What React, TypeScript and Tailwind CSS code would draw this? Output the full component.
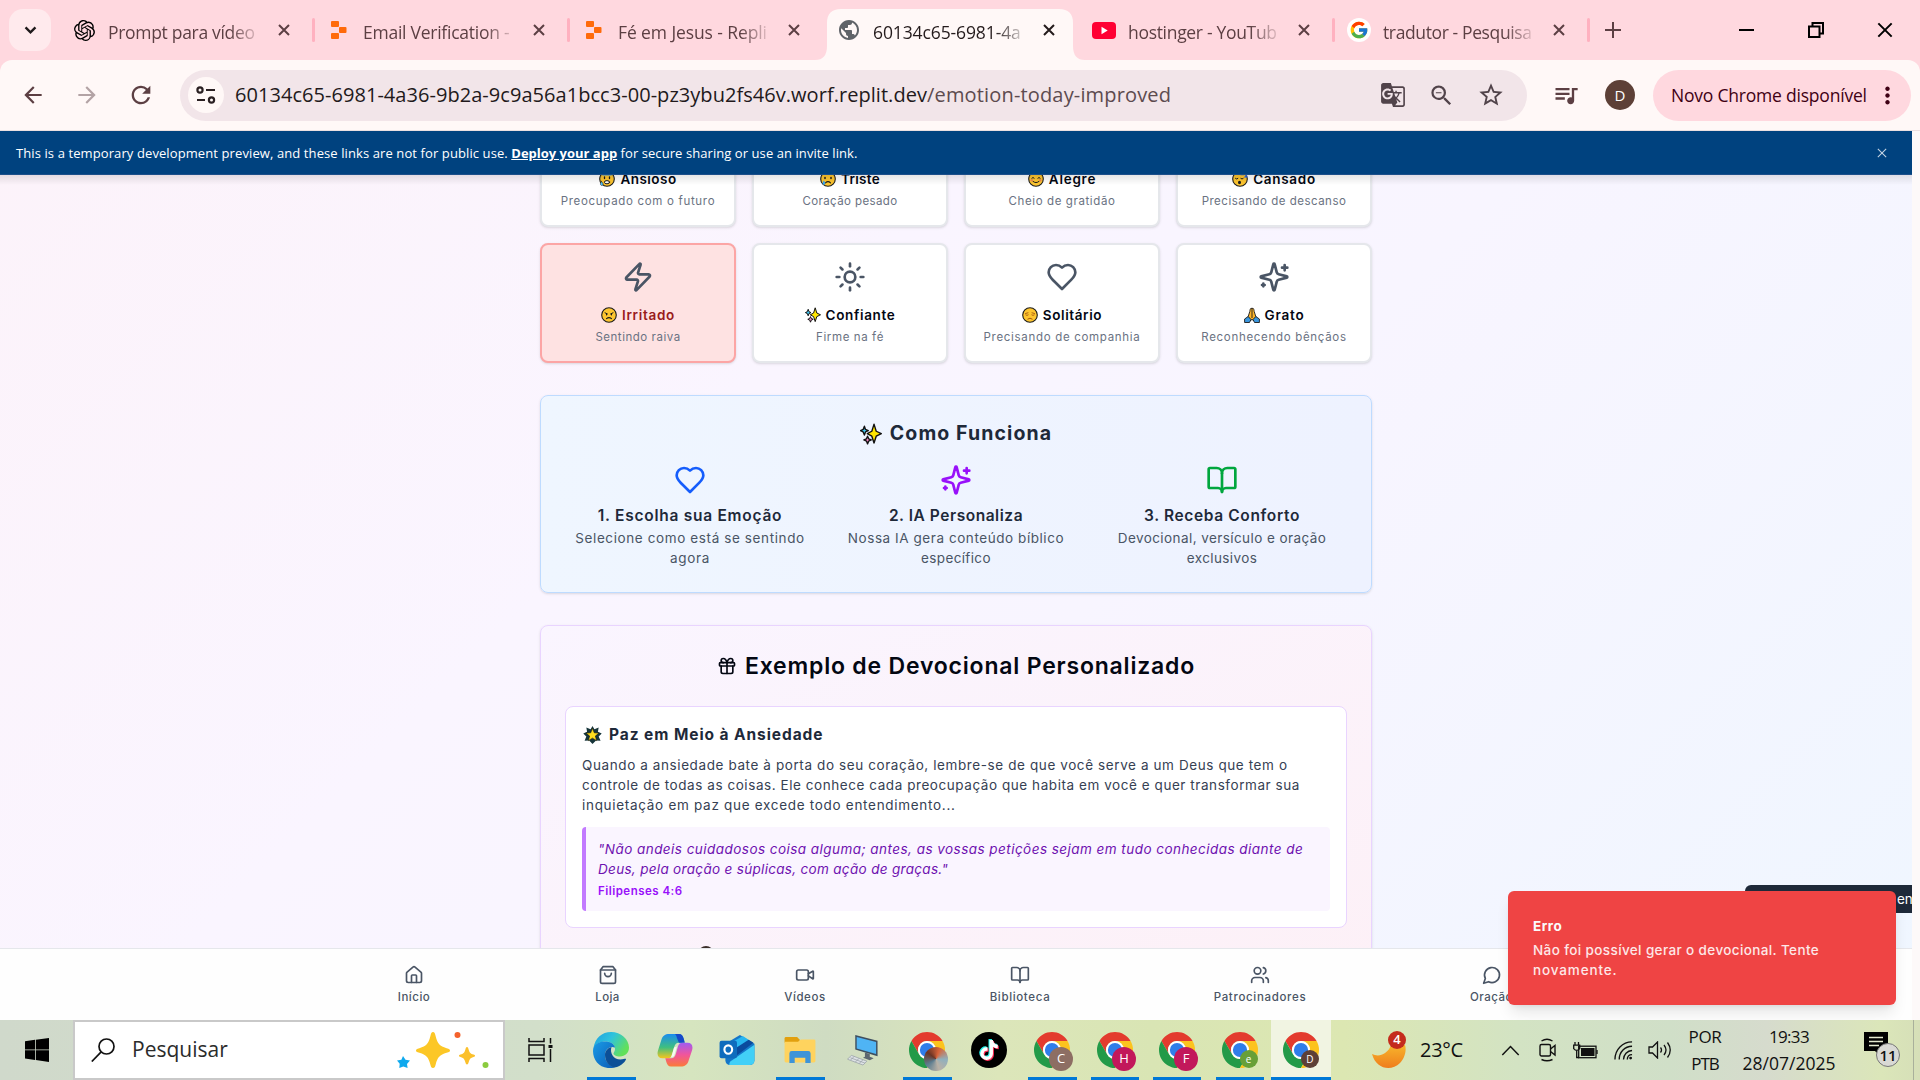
import React from "react";
import { Zap, Sun, BookOpen, Gift, House, Video, Users } from "lucide-react";
import {
  MdArrowBack,
  MdArrowForward,
  MdRefresh,
  MdGTranslate,
  MdZoomOut,
  MdStarBorder,
  MdQueueMusic,
  MdMoreVert,
  MdPublic,
} from "react-icons/md";
import { SiOpenai } from "react-icons/si";
import { FcGoogle } from "react-icons/fc";
import { FaTiktok } from "react-icons/fa";

type IconProps = { className?: string };

/* ---------- line icons ---------- */

const Line = ({ className, children, sw = 2 }: IconProps & { children: React.ReactNode; sw?: number }) => (
  <svg viewBox="0 0 24 24" fill="none" stroke="currentColor" strokeWidth={sw} strokeLinecap="round" strokeLinejoin="round" className={className}>
    {children}
  </svg>
);

const Heart = ({ className }: IconProps) => (
  <Line className={className}>
    <path d="M19 14c1.49-1.46 3-3.21 3-5.5A5.5 5.5 0 0 0 16.5 3c-1.76 0-3 .5-4.5 2-1.5-1.5-2.74-2-4.5-2A5.5 5.5 0 0 0 2 8.5c0 2.3 1.5 4.05 3 5.5l7 7Z" />
  </Line>
);

const Sparkles = ({ className }: IconProps) => (
  <Line className={className}>
    <path d="M9.937 15.5A2 2 0 0 0 8.5 14.063l-6.135-1.582a.5.5 0 0 1 0-.962L8.5 9.936A2 2 0 0 0 9.937 8.5l1.582-6.135a.5.5 0 0 1 .963 0L14.063 8.5A2 2 0 0 0 15.5 9.937l6.135 1.581a.5.5 0 0 1 0 .964L15.5 14.063a2 2 0 0 0-1.437 1.437l-1.582 6.135a.5.5 0 0 1-.963 0z" />
    <path d="M20 3v4M22 5h-4M4 17v2M5 18H3" />
  </Line>
);

const Bag = ({ className }: IconProps) => (
  <Line className={className}>
    <path d="M6 2 3 6v14a2 2 0 0 0 2 2h14a2 2 0 0 0 2-2V6l-3-4Z" />
    <path d="M3 6h18M16 10a4 4 0 0 1-8 0" />
  </Line>
);

const Message = ({ className }: IconProps) => (
  <Line className={className}>
    <path d="M7.9 20A9 9 0 1 0 4 16.1L2 22Z" />
  </Line>
);

const Cross = ({ className, sw = 2 }: IconProps & { sw?: number }) => (
  <svg viewBox="0 0 12 12" fill="none" stroke="currentColor" strokeWidth={sw} className={className}>
    <path d="M1 1 11 11M11 1 1 11" />
  </svg>
);

/* ---------- emoji ---------- */

const Face = ({ children }: { children: React.ReactNode }) => (
  <svg viewBox="0 0 16 16" className="size-4 shrink-0" fill="none" stroke="#1b1b1b" strokeLinecap="round">
    <circle cx="8" cy="8" r="7.3" fill="#fdc52f" strokeWidth="1.1" />
    {children}
  </svg>
);

const Anxious = () => (
  <Face>
    <path d="M1.2 8A7 7 0 0 1 14.8 8L13 4.500H3z" fill="#3a96dd" stroke="none" />
    <path d="M5.500 6v1.500M10.500 6v1.500" strokeWidth="1.300" />
    <ellipse cx="8" cy="11.200" rx="2.600" ry="1.600" fill="#fff" strokeWidth="1" />
    <path d="M2.500 10.500c-1 1.500-1.500 2.500-.7 3.500s2 .5 2.200-.6-.7-2-1.500-2.900z" fill="#4fc3f7" strokeWidth=".5" />
  </Face>
);
const Sad = () => (
  <Face>
    <path d="M5 6.500v1M11 6.500v1" strokeWidth="1.500" />
    <path d="M5.500 11.800Q8 9.500 10.500 11.800" strokeWidth="1.100" />
    <path d="M3.800 9.500c-1 1.500-1.600 2.700-.8 3.700s2 .5 2.200-.6-.7-2.200-1.400-3.100z" fill="#3aa5ee" stroke="none" />
  </Face>
);
const Happy = () => (
  <Face>
    <path d="M3.800 7.200q1.200-1.700 2.400 0M9.800 7.200q1.200-1.700 2.400 0M4.800 10.200Q8 13.200 11.200 10.200" strokeWidth="1" />
    <circle cx="3.800" cy="9.300" r="1.200" fill="#f2894f" stroke="none" />
    <circle cx="12.200" cy="9.300" r="1.200" fill="#f2894f" stroke="none" />
  </Face>
);
const Sleepy = () => (
  <Face>
    <path d="M3.500 7.500q1.200 1.200 2.400 0M8.800 7.500q1.200 1.200 2.400 0" strokeWidth="1" />
    <ellipse cx="7.500" cy="11.500" rx="1.500" ry="1.700" fill="#1b1b1b" stroke="none" />
    <path d="M9.500 1h2.500l-2.500 2.800H12M13 3.500h2.200L13 6h2.200" stroke="#2563eb" strokeWidth="1.100" />
  </Face>
);
const Angry = () => (
  <Face>
    <path d="M4 5.800 6.500 7M12 5.800 9.500 7M5.500 7v1M10.500 7v1" strokeWidth="1" />
    <path d="M5.500 11.600Q8 9.600 10.500 11.600" strokeWidth="1.100" />
  </Face>
);
const Lonely = () => (
  <Face>
    <path d="M3.500 6.500 6 5.800M12.500 6.500 10 5.800M3.800 8q1.200 1 2.400 0M9.800 8q1.200 1 2.400 0" stroke="#a4570c" strokeWidth=".9" />
    <path d="M5.800 12Q8 10.200 10.200 12" stroke="#a4570c" strokeWidth="1" />
  </Face>
);
const Hands = () => (
  <svg viewBox="0 0 16 16" className="size-4 shrink-0" stroke="#1b1b1b" strokeWidth=".9" strokeLinejoin="round">
    <path d="M7.200 1 8 2l.8-1c1 .6 1.200 2 1.400 3.500l1.600 5L10.500 14 8 12.500 5.500 14 4.200 9.500l1.600-5C6 3 6.200 1.600 7.200 1z" fill="#fdb52a" />
    <path d="M4.200 9.500 7 12.500 5.500 15.500H.6V12zM11.800 9.500 9 12.500l1.500 3h4.900V12z" fill="#3a96dd" />
    <path d="M8 2v9" fill="none" />
  </svg>
);
const Glitter = ({ className = "size-4 shrink-0" }: IconProps) => (
  <svg viewBox="0 0 16 16" className={className} stroke="#111" strokeWidth="1" strokeLinejoin="round">
    <path d="M3.200 2.300 4 4.700l2 .9-2 .9-.8 2.300-.9-2.300-1.900-.9 1.900-.9z" fill="#3ec6f2" />
    <path d="m5.500 9.600.8 1.900 1.900.8-1.900.8-.8 2.100-.8-2.100-1.900-.8 1.900-.8z" fill="#f48ac4" />
    <path d="M10.200.8 11.800 6l3.700 1.800-3.700 1.800-1.600 5-1.600-5-3.300-1.800L8.600 6z" fill="#ffe600" />
  </svg>
);
const GlowStar = () => (
  <svg viewBox="0 0 20 20" className="h-5 w-[19px] shrink-0" strokeLinejoin="round">
    <path d="m10 .5 2 3.500 4.500-2-.8 4.500 4 2-3.200 3 2 4.500-4.800-.3L10 19.500l-3.500-3.800-4.800.3 1.800-4.500-3.200-3 4-2L3.500 2 8 4z" fill="#16353a" />
    <path d="m10 3 1.900 4.700 5 .3-3.900 3.100 1.400 4.900L10 13.300 5.600 16 7 11.100 3.100 8l5-.3z" fill="#ffdf1f" stroke="#111" strokeWidth=".6" />
  </svg>
);

/* ---------- browser chrome ---------- */

const ReplitLogo = () => (
  <svg viewBox="0 0 16 18" className="h-[18px] w-4" fill="#ff6a0a">
    <rect x="0" y="0" width="8" height="6" rx="1" />
    <rect x="8" y="6" width="7.500" height="6" rx="1" />
    <rect x="0" y="12" width="8" height="6" rx="1" />
  </svg>
);
const YouTubeLogo = () => (
  <svg viewBox="0 0 24 17" className="h-[17px] w-6">
    <rect width="24" height="17" rx="4" fill="#ff0033" />
    <path d="m9.500 4.800 6.200 3.700-6.200 3.700z" fill="#fff" />
  </svg>
);

const tabs: { icon: React.ReactNode; text: string; tracking: string; sep?: boolean; active?: boolean }[] = [
  { icon: <SiOpenai className="size-[21px] text-black" />, text: "Prompt para vídeo", tracking: "tracking-[-0.31px]", sep: true },
  { icon: <ReplitLogo />, text: "Email Verification -", tracking: "tracking-[-0.25px]", sep: true },
  { icon: <ReplitLogo />, text: "Fé em Jesus - Repli", tracking: "tracking-[-0.1px]" },
  { icon: <MdPublic className="size-6 text-[#5f6368]" />, text: "60134c65-6981-4a", tracking: "tracking-[-0.11px]", active: true },
  { icon: <YouTubeLogo />, text: "hostinger - YouTub", tracking: "tracking-[-0.31px]", sep: true },
  {
    icon: (
      <span className="flex size-6 items-center justify-center rounded-full bg-white">
        <FcGoogle className="size-[20px]" />
      </span>
    ),
    text: "tradutor - Pesquisa",
    tracking: "tracking-[-0.38px]",
    sep: true,
  },
];

const TabBar = () => (
  <div className="flex h-[60px] shrink-0 bg-[#ffd8df]">
    <div className="ml-[9px] mt-[9px] flex h-[42px] w-[42px] items-center justify-center rounded-[14px] bg-[#ffeaed]">
      <svg viewBox="0 0 14 10" className="h-[9px] w-[13px]" fill="none" stroke="#1f1a1b" strokeWidth="2.600">
        <path d="m1.500 1.500 5.500 5.500 5.500-5.500" />
      </svg>
    </div>
    <div className="ml-[11px] flex">
      {tabs.map((t, i) => (
        <div key={i} className="relative flex h-[60px] w-[255px] pt-[9px]">
          {t.active && (
            <svg viewBox="0 0 270 51" className="absolute left-[-12px] top-[9px] h-[51px] w-[270px]" fill="#fff8f7">
              <path d="M0 51Q12 51 12 37V14Q12 0 26 0H244Q258 0 258 14V37Q258 51 270 51Z" />
            </svg>
          )}
          <div className="relative flex h-[42px] w-full items-center">
            <span className="ml-2.5 flex w-6 items-center justify-center">{t.icon}</span>
            <span
              className={`ml-3 w-[149px] overflow-hidden whitespace-nowrap pt-1 text-[17.5px] leading-6 [mask-image:linear-gradient(90deg,#000_82%,transparent_104%)] ${t.tracking} ${t.active ? "text-[#241b1c]" : "text-[#5c3f43]"}`}
            >
              {t.text}
            </span>
            <Cross sw={2} className={`ml-[21px] size-3 ${t.active ? "text-[#241b1c]" : "text-[#5c3f43]"}`} />
            {t.sep && <span className="ml-[22px] h-6 w-[3px] rounded-full bg-[#ffb1c0]" />}
          </div>
        </div>
      ))}
    </div>
    <svg viewBox="0 0 16 16" className="ml-[13px] mt-[22px] size-4" stroke="#5c3f43" strokeWidth="2">
      <path d="M8 0v16M0 8h16" />
    </svg>
    <div className="ml-auto mr-[27px] flex items-center text-black">
      <span className="mb-px h-0.5 w-[15px] bg-black" />
      <svg viewBox="0 0 16 16" className="ml-[54px] size-4" fill="none" stroke="#000" strokeWidth="2">
        <path d="M1 4.500h10.500V15H1zM4.500 4V1H15v10.500h-3" />
      </svg>
      <Cross sw={1.500} className="ml-[53px] size-4" />
    </div>
  </div>
);

const Toolbar = () => (
  <div className="flex h-[71px] shrink-0 bg-[#ffd8df]">
    <div className="flex w-full items-center rounded-t-[12px] border-b border-[#eadfe1] bg-[#fff8f7]">
      <MdArrowBack className="ml-5 size-[26px] text-[#5c3f43]" />
      <MdArrowForward className="ml-[28px] size-[26px] text-[#b3a3a5]" />
      <MdRefresh className="ml-[27px] size-[28px] text-[#5c3f43]" />
      <div className="ml-[25px] flex h-[51px] w-[1347px] items-center rounded-full bg-[#f2e5e9]">
        <span className="ml-2 flex size-9 items-center justify-center rounded-full bg-[#fff8f7]">
          <svg viewBox="0 0 20 18" className="h-[18px] w-5" fill="none" stroke="#2a2022" strokeWidth="2.200">
            <circle cx="4" cy="4" r="2.600" />
            <path d="M10 4h9M1 14h8" />
            <circle cx="15.500" cy="14" r="2.600" />
          </svg>
        </span>
        <p className="ml-[11px] whitespace-nowrap pb-px text-[20px] leading-7 tracking-[0.045px] text-[#22191b]">
          60134c65-6981-4a36-9b2a-9c9a56a1bcc3-00-pz3ybu2fs46v.worf.replit.dev
          <span className="tracking-[0.16px] text-[#5d4b4f]">/emotion-today-improved</span>
        </p>
        <div className="ml-auto mr-[22px] flex items-center gap-[22px] text-[#51434a]">
          <MdGTranslate className="size-[26px]" />
          <MdZoomOut className="size-[27px]" />
          <MdStarBorder className="size-[28px]" />
        </div>
      </div>
      <MdQueueMusic className="ml-[25px] size-[28px] -scale-x-100 rotate-180 -scale-y-100 text-[#5c3f43] [transform:none]" />
      <span className="ml-[25px] flex size-[30px] items-center justify-center rounded-full bg-[#5d4037] text-[15px] text-white">D</span>
      <div className="ml-[18px] flex h-[51px] w-[258px] items-center rounded-full bg-[#ffd8df] text-[#3f0014]">
        <span className="ml-[18px] whitespace-nowrap text-[17.5px] tracking-[-0.21px]">Novo Chrome disponível</span>
        <MdMoreVert className="ml-[7px] size-[27px]" />
      </div>
    </div>
  </div>
);

const PreviewBanner = () => (
  <div className="flex h-11 w-[1912px] shrink-0 items-center border-b border-[#1c4f8a] bg-[#00427f] pl-4 text-[13px] font-medium text-white">
    <p className="whitespace-nowrap pt-0.5">
      <span className="tracking-[0.1px]">This is a temporary development preview, and these links are not for public use.</span>{" "}
      <span className="font-bold underline">Deploy your app</span>{" "}
      <span className="tracking-[0.07px]">for secure sharing or use an invite link.</span>
    </p>
    <Cross sw={1.300} className="ml-auto mr-[25px] size-2.5 text-[#c3d3e3]" />
  </div>
);

/* ---------- page content ---------- */

const emotions = [
  { icon: Zap, emoji: <Anxious />, name: "Ansioso", nt: "tracking-[0.47px]", desc: "Preocupado com o futuro", dt: "tracking-[0.68px]" },
  { icon: Heart, emoji: <Sad />, name: "Triste", nt: "tracking-[0.3px]", desc: "Coração pesado", dt: "tracking-[0.4px]" },
  { icon: Sun, emoji: <Happy />, name: "Alegre", nt: "tracking-[0.75px]", desc: "Cheio de gratidão", dt: "tracking-[0.61px]" },
  { icon: Heart, emoji: <Sleepy />, name: "Cansado", nt: "tracking-[0.7px]", desc: "Precisando de descanso", dt: "tracking-[0.5px]" },
  { icon: Zap, emoji: <Angry />, name: "Irritado", nt: "tracking-[0.69px]", desc: "Sentindo raiva", dt: "tracking-[0.53px]", selected: true },
  { icon: Sun, emoji: <Glitter />, name: "Confiante", nt: "tracking-[0.67px]", desc: "Firme na fé", dt: "tracking-[0.61px]" },
  { icon: Heart, emoji: <Lonely />, name: "Solitário", nt: "tracking-[0.6px]", desc: "Precisando de companhia", dt: "tracking-[0.69px]" },
  { icon: Sparkles, emoji: <Hands />, name: "Grato", nt: "tracking-[0.8px]", desc: "Reconhecendo bênçãos", dt: "tracking-[0.69px]" },
];

const EmotionGrid = () => (
  <div className="grid grid-cols-4 gap-4">
    {emotions.map((e) => (
      <div
        key={e.name}
        className={`flex h-[120px] flex-col items-center rounded-lg border-2 pt-4 shadow-sm ${e.selected ? "border-[#fca5a5] bg-[#fee2e2]" : "border-gray-200 bg-white"}`}
      >
        <e.icon className="size-8 text-gray-600" />
        <div className={`mt-3 flex h-5 items-center gap-[5px] whitespace-nowrap text-[13.5px] font-semibold ${e.nt} ${e.selected ? "text-[#991b1b]" : "text-gray-950"}`}>
          {e.emoji}
          {e.name}
        </div>
        <p className={`mt-1 whitespace-nowrap text-[11.5px] leading-4 text-gray-500 ${e.dt}`}>{e.desc}</p>
      </div>
    ))}
  </div>
);

const steps = [
  {
    icon: <Heart className="size-8 text-blue-600" />,
    title: "1. Escolha sua Emoção",
    tt: "tracking-[0.74px]",
    lines: [
      ["Selecione como está se sentindo", "tracking-[0.61px]"],
      ["agora", "tracking-[0.7px]"],
    ],
  },
  {
    icon: <Sparkles className="size-8 text-purple-600" />,
    title: "2. IA Personaliza",
    tt: "tracking-[0.54px]",
    lines: [
      ["Nossa IA gera conteúdo bíblico", "tracking-[0.56px]"],
      ["específico", "tracking-[0.36px]"],
    ],
  },
  {
    icon: <BookOpen className="size-8 text-green-600" />,
    title: "3. Receba Conforto",
    tt: "tracking-[0.63px]",
    lines: [
      ["Devocional, versículo e oração", "tracking-[0.42px]"],
      ["exclusivos", "tracking-[0.39px]"],
    ],
  },
];

const HowItWorks = () => (
  <section className="mt-8 h-[198px] rounded-lg border border-blue-200 bg-linear-to-r from-[#eff6ff] to-[#eef2ff] p-6 shadow-sm">
    <h3 className="flex h-7 items-center justify-center gap-2 text-[19px] font-bold tracking-[1.1px] text-gray-800">
      <Glitter className="size-[22px]" />
      <span className="text-[19.5px]">Como Funciona</span>
    </h3>
    <div className="mt-4 grid grid-cols-3 gap-4">
      {steps.map((s) => (
        <div key={s.title} className="flex flex-col items-center">
          {s.icon}
          <h4 className={`mt-2 text-[15.5px] font-semibold leading-6 text-gray-800 ${s.tt}`}>{s.title}</h4>
          {s.lines.map(([text, tracking]) => (
            <p key={text} className={`whitespace-nowrap text-[13.5px] leading-5 text-gray-600 ${tracking}`}>
              {text}
            </p>
          ))}
        </div>
      ))}
    </div>
  </section>
);

const Example = () => (
  <section className="mt-8 h-[420px] rounded-lg border border-purple-200 bg-linear-to-br from-[#faf5ff] to-[#fdf0f6] p-6 shadow-sm">
    <h3 className="flex h-8 items-center justify-center gap-2 whitespace-nowrap text-[23px] font-semibold tracking-[0.8px] text-gray-950">
      <Gift className="size-5" strokeWidth={2} />
      Exemplo de Devocional Personalizado
    </h3>
    <div className="mt-6 h-[222px] rounded-lg border border-purple-200 bg-white p-4">
      <h4 className="flex h-6 items-center gap-[7px] pl-px text-[15.5px] font-bold tracking-[0.92px] text-gray-800">
        <GlowStar />
        Paz em Meio à Ansiedade
      </h4>
      <div className="mt-2 whitespace-nowrap text-[13.5px] leading-5 text-gray-700">
        <p className="tracking-[0.6px]">Quando a ansiedade bate à porta do seu coração, lembre-se de que você serve a um Deus que tem o</p>
        <p className="tracking-[0.56px]">controle de todas as coisas. Ele conhece cada preocupação que habita em você e quer transformar sua</p>
        <p className="tracking-[0.7px]">inquietação em paz que excede todo entendimento...</p>
      </div>
      <blockquote className="mt-3 h-[84px] whitespace-nowrap rounded border-l-4 border-purple-400 bg-[#faf5ff] p-3">
        <div className="text-[13.5px] italic leading-5 text-purple-800">
          <p className="tracking-[0.46px]">"Não andeis cuidadosos coisa alguma; antes, as vossas petições sejam em tudo conhecidas diante de</p>
          <p className="tracking-[0.31px]">Deus, pela oração e súplicas, com ação de graças."</p>
        </div>
        <p className="mt-1 text-[11.5px] font-semibold leading-4 tracking-[0.48px] text-purple-600">Filipenses 4:6</p>
      </blockquote>
    </div>
    <div className="ml-[133px] mt-[18px] size-4 rounded-full border-2 border-[#3b2f2a] bg-[#c9962b]" />
  </section>
);

const navItems = [
  { icon: <House className="size-5" />, label: "Início", w: "w-[188px]", t: "tracking-[0.51px]" },
  { icon: <Bag className="size-5" />, label: "Loja", w: "w-[199px]", t: "tracking-[0.38px]" },
  { icon: <Video className="size-5" />, label: "Vídeos", w: "w-[196px]", t: "tracking-[0.55px]" },
  { icon: <BookOpen className="size-5" />, label: "Biblioteca", w: "w-[234px]", t: "tracking-[0.65px]" },
  { icon: <Users className="size-5" />, label: "Patrocinadores", w: "w-[246px]", t: "tracking-[0.68px]" },
  { icon: <Message className="size-5" />, label: "Oração", w: "w-[217px]", t: "tracking-[0.5px]" },
];

const BottomNav = () => (
  <nav className="flex h-[72px] shrink-0 border-t border-gray-200 bg-[#fefefe] pl-80 text-gray-600">
    {navItems.map((n) => (
      <div key={n.label} className={`flex flex-col items-center pt-4 ${n.w}`}>
        {n.icon}
        <span className={`mt-1 text-[11.5px] font-medium leading-4 ${n.t}`}>{n.label}</span>
      </div>
    ))}
  </nav>
);

const Toast = () => (
  <div className="absolute bottom-[15px] right-4 h-[114px] w-[388px] rounded-md bg-[#ef4444] pl-[25px] pt-[25px] text-[13.5px] leading-5 text-[#fafafa] shadow-lg">
    <p className="font-bold tracking-[0.5px]">Erro</p>
    <div className="mt-1 font-medium text-[#fde8e8]">
      <p className="whitespace-nowrap tracking-[0.38px]">Não foi possível gerar o devocional. Tente</p>
      <p className="tracking-[0.86px]">novamente.</p>
    </div>
  </div>
);

/* ---------- taskbar ---------- */

const ChromeLogo = () => (
  <svg viewBox="2 2 44 44" className="size-9">
    <path d="M24 13H43.050A22 22 0 0 0 4.950 13L14.470 29.500A11 11 0 0 1 24 13Z" fill="#e33b2e" />
    <path d="M14.470 29.500 4.950 13A22 22 0 0 0 24 46L33.530 29.500A11 11 0 0 1 14.470 29.500Z" fill="#239a48" />
    <path d="M33.530 29.500 24 46A22 22 0 0 0 43.050 13H24A11 11 0 0 1 33.530 29.500Z" fill="#fcc31e" />
    <circle cx="24" cy="24" r="11" fill="#fff" />
    <circle cx="24" cy="24" r="8.700" fill="#2f7de9" />
  </svg>
);

const Task = ({ w, bar, active, children }: { w: string; bar?: string; active?: boolean; children: React.ReactNode }) => (
  <div className={`relative flex h-[60px] items-center justify-center ${w} ${active ? "bg-[#f1f4e2]" : ""}`}>
    {children}
    {bar && <span className={`absolute bottom-0 h-[3px] bg-[#0078d7] ${bar}`} />}
  </div>
);

const ChromeTask = ({ w, bar, letter, badge, active, small }: { w: string; bar: string; letter?: string; badge: string; active?: boolean; small?: boolean }) => (
  <Task w={w} bar={bar} active={active}>
    <div className="relative">
      <ChromeLogo />
      <span
        className={`absolute flex items-center justify-center rounded-full text-white ${small ? "bottom-0 right-0 size-[18px] text-[10px]" : "bottom-[-3px] right-[-3px] size-6 text-[13px]"} ${badge}`}
      >
        {letter}
      </span>
    </div>
  </Task>
);

const Edge = () => (
  <svg viewBox="0 0 36 36" className="size-9">
    <defs>
      <linearGradient id="edgeTop" x1="0" y1="0" x2="1" y2=".5">
        <stop offset="0" stopColor="#1d9fe0" />
        <stop offset=".5" stopColor="#2fc3dd" />
        <stop offset="1" stopColor="#62e05a" />
      </linearGradient>
      <linearGradient id="edgeLow" x1="0" y1="0" x2="1" y2="1">
        <stop offset="0" stopColor="#1a9be6" />
        <stop offset="1" stopColor="#0a5db8" />
      </linearGradient>
    </defs>
    <path d="M.5 16C2 6 9 0 18 0c10 0 18 7.500 18 15.500 0 5.500-4 9-9 9-4 0-6.500-1.500-6.500-3 0-1 1.500-2 1.500-4.500C22 12.500 18 9.500 13 9.500 7 9.500 2.500 12 .5 16z" fill="url(#edgeTop)" />
    <path d="M0 19C0 12 6 9.500 12 9.500c5 0 9 2 10 6-6-2-10 2-10 8C12 29 16 34 22 35.500 9 38.500 0 30 0 19z" fill="url(#edgeLow)" />
    <path d="M12 23c0-4 2.500-7 6.500-8-2 6 2 12.500 9 12.500 3 0 5-1 5.500-.5.600.8-4.500 8-11.500 8.500C16 34.500 12 29.500 12 23z" fill="#0c4f97" />
  </svg>
);

const Copilot = () => (
  <svg viewBox="0 0 36 34" className="h-[33px] w-9">
    <defs>
      <linearGradient id="coA" x1="0" y1="0" x2="0" y2="1">
        <stop offset="0" stopColor="#1a8cf0" />
        <stop offset=".55" stopColor="#3fbf7f" />
        <stop offset="1" stopColor="#f6c51c" />
      </linearGradient>
      <linearGradient id="coB" x1="0" y1="0" x2="0" y2="1">
        <stop offset="0" stopColor="#a05cf2" />
        <stop offset=".5" stopColor="#f0559c" />
        <stop offset="1" stopColor="#fb7a38" />
      </linearGradient>
    </defs>
    <path d="M12 0h10c3 0 4 2 5 5l1 4h-6c-3 0-4 2-5 5l-2 7c-1 3-2 4-5 4H5c-4 0-6-3-4.500-8L4 6c1-4 4-6 8-6z" fill="url(#coA)" />
    <path d="M18 0h4c3 0 4 2 5 5l1 4h-6l-2-5c-.5-2-1-3-2-4z" fill="#1749c9" />
    <path d="M24 33.500H14c-3 0-4-2-5-5L8 25h6c3 0 4-2 5-5l2-7c1-3 2-4 5-4h5c4 0 6 3 4.500 8L32 27.500c-1 4-4 6-8 6z" fill="url(#coB)" />
    <path d="m17 14 3-1-3 10-3 1z" fill="#fff" opacity=".8" />
  </svg>
);

const Outlook = () => (
  <svg viewBox="0 0 36 32" className="h-[31px] w-9">
    <path d="M6 9 21 0l15 9v17c0 3-2 5-5 5H11c-3 0-5-2-5-5z" fill="#1476c8" />
    <path d="M12 8 24 1l9 6-17 13z" fill="#28b6f0" />
    <path d="m16 14 14-9 5 3-17 13z" fill="#0a4b9e" />
    <path d="m36 10v16c0 3-2 5-5 5H10c0-3 1-4 3-5z" fill="#42d0f7" />
    <rect y="6" width="18" height="18" rx="2" fill="#0f6cbd" />
    <ellipse cx="9" cy="15" rx="4" ry="4.300" fill="none" stroke="#fff" strokeWidth="2.200" />
  </svg>
);

const Folder = () => (
  <svg viewBox="0 0 32 28" className="h-[27px] w-8">
    <path d="M0 1.500Q0 0 1.500 0H13l3 3-2 3H0z" fill="#e2a00f" />
    <path d="M0 5h14l3-2.500h13.500Q32 2.500 32 4v21q0 1.500-1.500 1.500h-29Q0 26.500 0 25z" fill="#ffd35e" />
    <path d="M5 27V17q0-2.500 2.500-2.500h17Q27 14.500 27 17v10h-5.500v-5.500h-11V27z" fill="#3d94d9" />
  </svg>
);

const Computer = () => (
  <svg viewBox="0 0 32 32" className="h-[31px] w-8">
    <path d="m8 0 23 6v16L8 15z" fill="#3e4f60" />
    <path d="m9.500 2 20 5.300v12.400l-20-5.700z" fill="#4fb4f4" />
    <path d="m18 18 5 1.500v3l4 1.500-4 2-7-2.500 2-1z" fill="#5c6670" />
    <path d="m4 21 16 6-4 4L0 25z" fill="#dfe3e6" stroke="#9aa2a8" strokeWidth=".8" />
    <path d="m3 23.500 15 5.500M7 22l-4 4M12 24l-4 4M16 25.500l-4 4" stroke="#9aa2a8" strokeWidth=".8" />
  </svg>
);

const SearchBox = () => (
  <div className="flex h-[60px] w-[432px] items-center border-2 border-[#c9c9c9] bg-white">
    <svg viewBox="0 0 24 24" className="ml-4 size-6" fill="none" stroke="#111" strokeWidth="1.700">
      <circle cx="15.500" cy="8.500" r="7.500" />
      <path d="M10.200 13.800.8 23.500" />
    </svg>
    <span className="ml-[17px] text-[21px] text-[#2b2b2b]">Pesquisar</span>
    <svg viewBox="0 0 92 36" className="ml-auto mr-3.5 h-9 w-[92px]">
      <path d="M36 0c1.500 0 2 1.500 2.600 4 2 8 4 10 11 12.200 2.800.9 3.400 1.300 3.400 2.300s-.6 1.400-3.400 2.300c-7 2.200-9 4.200-11 12-.6 2.300-1.100 3.200-2.600 3.200s-2-.9-2.600-3.200c-2-7.800-4-9.800-11-12C19.600 19.900 19 19.500 19 18.500s.6-1.400 3.400-2.300c7-2.200 9-4.200 11-12.200C34 1.500 34.500 0 36 0z" fill="#fcc726" />
      <path d="M70 15c1 0 1.300 1.300 1.700 2.800.9 3.200 2 4 4.800 4.800 1.100.3 1.500.6 1.500 1.200s-.4.900-1.500 1.200c-2.800.8-3.900 1.800-4.800 5-.4 1.400-.7 2.500-1.700 2.500s-1.300-1.100-1.700-2.500c-.9-3.200-2-4.200-4.800-5-1.100-.3-1.500-.6-1.500-1.200s.4-.9 1.500-1.200c2.800-.8 3.900-1.600 4.800-4.800.4-1.500.7-2.800 1.700-2.800z" fill="#fbc02b" />
      <path d="m6 24 2.500 3.800 4.500.7-3 3.500.6 4-4.300-1.600L2.300 36l.4-4.300L0 28.500l4.400-.8z" fill="#0ea9ee" />
      <circle cx="60.500" cy="3" r="3" fill="#f4622c" />
      <circle cx="88.500" cy="33" r="3" fill="#8bcb3f" />
    </svg>
  </div>
);

const Tray = () => (
  <div className="flex h-[60px] w-[589px] shrink-0 items-center text-[#111]">
    <div className="relative ml-[41px] size-[38px]">
      <svg viewBox="0 0 34 24" className="absolute bottom-0 left-0 h-[24px] w-[34px]">
        <defs>
          <linearGradient id="moon" x1="0" y1="0" x2="0" y2="1">
            <stop offset="0" stopColor="#f7b52c" />
            <stop offset="1" stopColor="#ef7d1c" />
          </linearGradient>
        </defs>
        <path d="M0 9c4 2 9 2 13-1 3-2 5-5 6-8h14c2 6-1 14-5 18-9 9-24 6-28-9z" fill="url(#moon)" />
      </svg>
      <span className="absolute left-4 top-0 flex size-[18px] items-center justify-center rounded-full bg-[#c42b1c] text-[13px] font-semibold text-white">4</span>
    </div>
    <span className="ml-2.5 w-[44px] whitespace-nowrap text-[20px] tracking-[-0.3px]">23°C</span>
    <svg viewBox="0 0 18 11" className="ml-[37px] h-[11px] w-[19px]" fill="none" stroke="currentColor" strokeWidth="1.500">
      <path d="m.8 10 8.200-8.500L17.200 10" />
    </svg>
    <svg viewBox="0 0 18 24" className="ml-[19px] h-6 w-[18px]" fill="none" stroke="currentColor" strokeWidth="1.400">
      <path d="M2.500 3q5.500-3.500 11 0M2.500 21.500q5.500 2.500 11 0" />
      <rect x="1" y="6.500" width="10.500" height="11.500" rx="1.500" />
      <path d="m11.500 11 4.500-3.500v9.500l-4.500-3.500" />
    </svg>
    <svg viewBox="0 0 25 17" className="ml-4 h-[17px] w-[25px]" fill="none" stroke="currentColor" strokeWidth="1.300">
      <rect x="5.700" y="4.200" width="17.300" height="11.500" />
      <rect x="8" y="6" width="13.500" height="8" fill="currentColor" stroke="none" />
      <path d="M24 8v4M2 0v3M5.500 0v3M.7 3.200h6v3.500q-3 3.500-6 0zM3.700 8v7.500H6" />
    </svg>
    <svg viewBox="0 0 20 20" className="ml-4 size-[19px]" fill="none" stroke="currentColor" strokeWidth="1.400">
      <path d="M1 19.500C1 9 9 1 19 1M5.500 19.500C5.500 11.500 11.500 5.500 19 5.500M10 19.500c0-5 4-9.500 9-9.500" />
      <path d="M14 19.500c0-3 2-5.200 5-5.200" />
      <circle cx="17.500" cy="18" r="1.500" fill="currentColor" stroke="none" />
    </svg>
    <svg viewBox="0 0 24 18" className="ml-[15px] h-[18px] w-6" fill="none" stroke="currentColor" strokeWidth="1.300">
      <path d="M1 6h3.500l5-5v16l-5-5H1z" />
      <path d="M12.500 6.500q2 2.500 0 5M16 4q4 5 0 10M19.500 1.500q5.500 7.500 0 15" />
    </svg>
    <div className="ml-[15px] flex w-9 flex-col items-center text-[17px] leading-[27px]">
      <span className="tracking-[-0.3px]">POR</span>
      <span className="tracking-[-1px]">PTB</span>
    </div>
    <div className="ml-[19px] flex w-[94px] flex-col items-center text-[17px] leading-[27px]">
      <span className="tracking-[-0.7px]">19:33</span>
      <span className="text-[17.5px]">28/07/2025</span>
    </div>
    <div className="relative ml-[28px] h-9 w-9">
      <svg viewBox="0 0 25 24" className="absolute left-0 top-0 h-6 w-[25px]">
        <path d="M0 0h24v19H16v5l-5-5H0z" fill="#000" />
        <path d="M5 5.500h14M5 9.500h14M5 13.500h10" stroke="#e5ead0" strokeWidth="1.300" />
      </svg>
      <span className="absolute left-3 top-[11px] flex size-6 items-center justify-center rounded-full border border-[#777] bg-[#d9d9d4] text-[15px] font-semibold">11</span>
    </div>
    <span className="ml-auto mr-1.5 h-full w-px bg-[#a9b09b]" />
  </div>
);

const Taskbar = () => (
  <footer className="flex h-[60px] shrink-0 items-center bg-[linear-gradient(90deg,#d0d9cb_0%,#d2dfca_28%,#d6e5bf_36%,#cfdcc2_43%,#dce6ba_52%,#d9e5b4_60%,#dce7b2_70%,#d3e3c3_79%,#d0dfc8_87%,#d6dbcd_92%,#dbe6b9_98%,#d6dfb8_100%)] font-['Open_Sans',sans-serif]">
    <div className="flex w-[73px] shrink-0 justify-center">
      <svg viewBox="0 0 24 24" className="size-6" fill="#000">
        <path d="M0 3.200 10 1.800v9.700H0zM10.800 1.700 24 0v11.500H10.800zM0 12.300h10V22L0 20.600zM10.800 12.300H24V24l-13.200-1.900z" />
      </svg>
    </div>
    <SearchBox />
    <Task w="w-[71px]">
      <svg viewBox="0 0 25 24" className="h-6 w-[25px]" fill="none" stroke="#111" strokeWidth="1.500">
        <path d="M1 0v3.500h15V0M1 24v-3.500h15V24M1 7h15v10H1zM22.500 0v5.500M22.500 11v13" />
        <path d="M20.500 8.500h4" strokeWidth="3" />
      </svg>
    </Task>
    <Task w="w-[70px]" bar="w-[49px]"><Edge /></Task>
    <Task w="w-[58px]"><Copilot /></Task>
    <Task w="w-[66px]"><Outlook /></Task>
    <Task w="w-[60px]" bar="w-[49px]"><Folder /></Task>
    <Task w="w-[66px]"><Computer /></Task>
    <ChromeTask w="w-[62px]" bar="w-[49px]" badge="bg-[conic-gradient(from_20deg,#d9643a,#8fb0bd,#b9b1a6,#5c7d90,#6b3424,#d9643a)]" />
    <Task w="w-[62px]">
      <span className="flex size-9 items-center justify-center rounded-full bg-black">
        <FaTiktok className="size-5 text-white [filter:drop-shadow(1px_1px_0_#fe2c55)_drop-shadow(-1px_-1px_0_#25f4ee)]" />
      </span>
    </Task>
    <ChromeTask w="w-[64px]" bar="w-[49px]" letter="C" badge="bg-[#8d6e63]" />
    <ChromeTask w="w-[62px]" bar="w-[48px]" letter="H" badge="bg-[#c2185b]" />
    <ChromeTask w="w-[62px]" bar="w-[48px]" letter="F" badge="bg-[#c2185b]" />
    <ChromeTask w="w-[63px]" bar="w-[48px]" letter="e" badge="bg-[#689f38]" small />
    <ChromeTask w="w-[60px]" bar="w-full" letter="D" badge="bg-[#5d4037]" small active />
    <Tray />
  </footer>
);

export default function App() {
  return (
    <div className="flex h-[1080px] w-[1920px] flex-col overflow-hidden bg-[#fdf9f9] font-['Open_Sans',sans-serif]">
      <TabBar />
      <Toolbar />
      <PreviewBanner />
      <div className="relative flex min-h-0 w-[1912px] flex-1 flex-col overflow-hidden bg-[linear-gradient(135deg,#fdf2f8_-15%,#faf5ff_35%,#f8f5ff_55%,#eff6ff_100%)] font-['Inter',sans-serif]">
        <main className="min-h-0 flex-1 overflow-hidden">
          <div className="mx-auto -mt-[68px] w-[832px]">
            <EmotionGrid />
            <HowItWorks />
            <Example />
          </div>
        </main>
        <div className="absolute left-0 top-0 h-2.5 w-full bg-linear-to-b from-black/10 to-transparent" />
        <BottomNav />
        <div className="absolute bottom-[107px] right-0 h-7 w-[167px] overflow-hidden rounded-tl-md bg-gray-800">
          <span className="absolute left-[152px] top-1 text-[13.5px] leading-5 text-white">en</span>
        </div>
        <Toast />
      </div>
      <Taskbar />
    </div>
  );
}
